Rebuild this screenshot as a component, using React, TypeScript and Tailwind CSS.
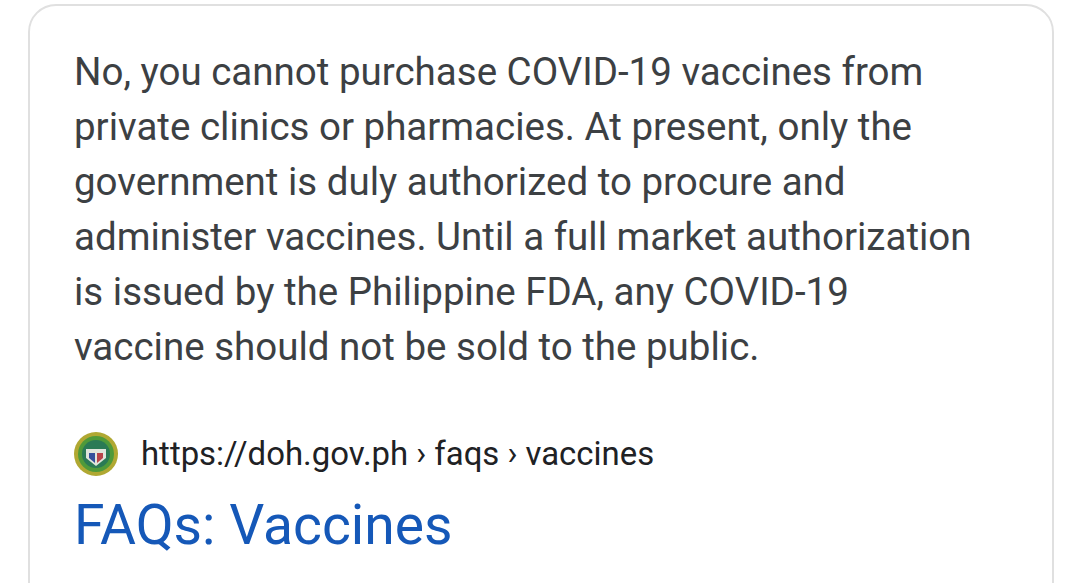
export default function App() {
  return (
    <div className="h-[583px] w-[1080px] overflow-hidden bg-white pl-7 pr-[26px] pt-1 font-['Roboto',sans-serif]">
      <div className="h-[620px] rounded-[28px] border-2 border-[#e0e0e0] bg-white pl-[44px] pt-[38px]">
        <p className="w-[960px] text-[38.5px] leading-[55px] text-[#3c4043]">
          No, you cannot purchase COVID-19 vaccines from<br />
          private clinics or pharmacies. At present, only the<br />
          government is duly authorized to procure and<br />
          administer vaccines. Until a full market authorization<br />
          is issued by the Philippine FDA, any COVID-19<br />
          vaccine should not be sold to the public.
        </p>
        <div className="mt-[58px] flex items-center gap-[23px]">
          <svg viewBox="0 0 44 44" className="h-[44px] w-[44px] blur-[0.6px]">
            <circle cx="22" cy="22" r="22" fill="#b0a832" />
            <circle cx="22" cy="22" r="18" fill="#4f9a3a" />
            <circle cx="22" cy="22" r="14" fill="#2a7a55" />
            <path d="M12 17h20v9l-10 8-10-8z" fill="#dfe5dc" />
            <path d="M15 21h6v10l-6-5z" fill="#34509c" />
            <path d="M23 21h6v5l-6 5z" fill="#b8444a" />
          </svg>
          <span className="text-[32.9px] leading-[44px] text-[#202124]">https://doh.gov.ph › faqs › vaccines</span>
        </div>
        <h3 className="mt-[18px] text-[55.2px] leading-[62px] text-[#1558b8]">FAQs: Vaccines</h3>
      </div>
    </div>
  );
}
